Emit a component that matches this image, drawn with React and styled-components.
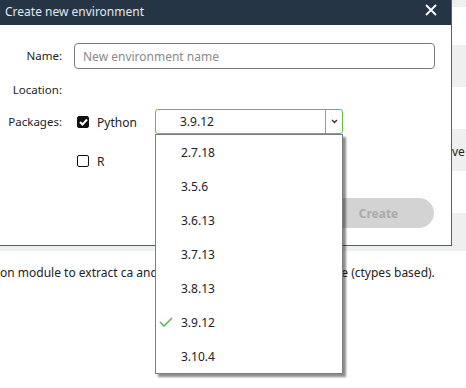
import React from "react"
import styled, { createGlobalStyle } from "styled-components"

const GlobalStyle = createGlobalStyle`
	html, body {
		margin: 0;
		padding: 0;
		background: #ffffff;
	}
	body {
		font-family: "Noto Sans", "DejaVu Sans", sans-serif;
		font-size: 12px;
		color: #222222;
	}
`

const Screen = styled.div`
	position: relative;
	width: 466px;
	height: 388px;
	overflow: hidden;
	background: #ffffff;
`

/* page behind the modal */
const Band = styled.div`
	height: ${(props) => props.h}px;
	background: ${(props) => (props.shade ? "#efefef" : "#ffffff")};
	display: flex;
	align-items: center;
	padding-left: ${(props) => props.indent || 0}px;
	padding-top: 3px;
	box-sizing: border-box;
	white-space: nowrap;
	font-size: 12px;
	color: #222;
`

const Description = styled.div`
	padding-top: 13px;
	line-height: 18px;
	font-size: 12px;
	color: #222;
	white-space: nowrap;
`

/* modal */
const Dialog = styled.div`
	position: absolute;
	top: 0;
	left: 0;
	width: 451px;
	height: 245px;
	background: #ffffff;
	border-right: 1px solid #4f6272;
	border-bottom: 1px solid #4f6272;
	display: flex;
	flex-direction: column;
`

const TitleBar = styled.div`
	height: 25px;
	box-sizing: border-box;
	background: #253545;
	color: #e4e8ec;
	font-size: 12px;
	display: flex;
	align-items: center;
	justify-content: space-between;
	padding: 0 14px 2px 5px;
`

const CloseButton = styled.button`
	border: none;
	background: none;
	padding: 0;
	width: 12px;
	height: 12px;
	display: flex;
	align-self: flex-start;
	margin-top: 4px;
	cursor: pointer;
	svg {
		stroke: #ffffff;
		stroke-width: 1.8;
	}
`

const Body = styled.div`
	display: flex;
	flex-direction: column;
	padding: 0 16px 0 0;
`

const Row = styled.div`
	display: flex;
	align-items: ${(props) => props.align || "center"};
	margin-top: ${(props) => props.top}px;
	min-height: 26px;
`

const Label = styled.label`
	width: 62px;
	flex: none;
	text-align: right;
	margin-right: 12px;
	font-size: 11.5px;
	color: #222;
	line-height: 26px;
`

const TextInput = styled.input`
	flex: 1;
	height: 26px;
	box-sizing: border-box;
	border: 1px solid #7a7a7a;
	border-radius: 4px;
	padding: 0 8px;
	font-family: inherit;
	font-size: 12px;
	outline: none;
	&::placeholder {
		color: #8a8a8a;
	}
`

const PackageList = styled.div`
	display: flex;
	flex-direction: column;
	gap: 13px;
`

const Package = styled.div`
	display: flex;
	align-items: center;
	height: 26px;
`

const Box = styled.span`
	width: 12px;
	height: 12px;
	box-sizing: border-box;
	margin-left: 3px;
	border-radius: 2px;
	border: 1.5px solid #111;
	background: ${(props) => (props.checked ? "#111" : "#fff")};
	display: flex;
	align-items: center;
	justify-content: center;
	svg {
		fill: none;
		stroke: #fff;
		stroke-width: 2;
	}
`

const PackageName = styled.span`
	width: 58px;
	margin-left: 8px;
	font-size: 12px;
	color: #222;
`

const Select = styled.div`
	width: 188px;
	height: 25px;
	box-sizing: border-box;
	border: 1px solid #6abb4c;
	border-radius: 3px;
	display: flex;
	align-items: center;
	margin-top: -1px;
`

const SelectValue = styled.span`
	flex: 1;
	padding-left: 24px;
	font-size: 12px;
	color: #222;
`

const SelectArrow = styled.span`
	width: 16px;
	height: 100%;
	border-left: 1px solid #9a9a9a;
	display: flex;
	align-items: center;
	justify-content: center;
	svg {
		fill: none;
		stroke: #333;
		stroke-width: 1.4;
	}
`

const Footer = styled.div`
	display: flex;
	justify-content: flex-end;
	margin-top: 24px;
	padding-right: 1px;
`

const CreateButton = styled.button`
	width: 111px;
	height: 30px;
	border: none;
	border-radius: 15px;
	background: #d3d3d3;
	color: #aaaaaa;
	font-family: inherit;
	font-size: 12px;
	font-weight: 700;
`

/* open dropdown of the python select */
const Menu = styled.ul`
	position: absolute;
	top: 134px;
	left: 155px;
	width: 188px;
	box-sizing: border-box;
	margin: 0;
	padding: 0;
	list-style: none;
	background: #ffffff;
	border: 1px solid #7d7d7d;
	box-shadow: 3px 3px 2px rgba(0, 0, 0, 0.45);
`

const MenuItem = styled.li`
	position: relative;
	height: 34px;
	display: flex;
	align-items: center;
	padding-left: 25px;
	font-size: 12px;
	color: #222;
	svg {
		position: absolute;
		left: 3px;
		top: 12px;
		fill: none;
		stroke: #5cb85c;
		stroke-width: 1.6;
	}
`

const versions = ["2.7.18", "3.5.6", "3.6.13", "3.7.13", "3.8.13", "3.9.12", "3.10.4"]
const selected = "3.9.12"

function Checkbox({ checked }) {
	return (
		<Box checked={checked}>
			{checked ? (
				<svg width="9" height="8" viewBox="0 0 9 8">
					<polyline points="1 4 3.5 6.5 8 1.5" />
				</svg>
			) : null}
		</Box>
	)
}

export default function App() {
	return (
		<Screen>
			<GlobalStyle />
			<Band h={7} shade />
			<Band h={38} />
			<Band h={42} shade />
			<Band h={42} />
			<Band h={42} shade indent={452}>
				ve
			</Band>
			<Band h={42} />
			<Band h={38} shade />
			<Description>
				on module to extract ca and crl certs from windows' cert store (ctypes based).
			</Description>

			<Dialog>
				<TitleBar>
					<span>Create new environment</span>
					<CloseButton aria-label="Close">
						<svg width="12" height="12" viewBox="0 0 12 12">
							<path d="M1 1 L11 11 M11 1 L1 11" />
						</svg>
					</CloseButton>
				</TitleBar>
				<Body>
					<Row top={18}>
						<Label>Name:</Label>
						<TextInput placeholder="New environment name" />
					</Row>
					<Row top={8}>
						<Label>Location:</Label>
					</Row>
					<Row top={6} align="flex-start">
						<Label>Packages:</Label>
						<PackageList>
							<Package>
								<Checkbox checked />
								<PackageName>Python</PackageName>
								<Select>
									<SelectValue>{selected}</SelectValue>
									<SelectArrow>
										<svg width="7" height="5" viewBox="0 0 7 5">
											<polyline points="1 1 3.5 3.5 6 1" />
										</svg>
									</SelectArrow>
								</Select>
							</Package>
							<Package>
								<Checkbox />
								<PackageName>R</PackageName>
							</Package>
						</PackageList>
					</Row>
					<Footer>
						<CreateButton disabled>Create</CreateButton>
					</Footer>
				</Body>
			</Dialog>

			<Menu>
				{versions.map((v) => (
					<MenuItem key={v}>
						{v === selected ? (
							<svg width="14" height="10" viewBox="0 0 14 10">
								<polyline points="1 5 5 9 13 1" />
							</svg>
						) : null}
						{v}
					</MenuItem>
				))}
			</Menu>
		</Screen>
	)
}
